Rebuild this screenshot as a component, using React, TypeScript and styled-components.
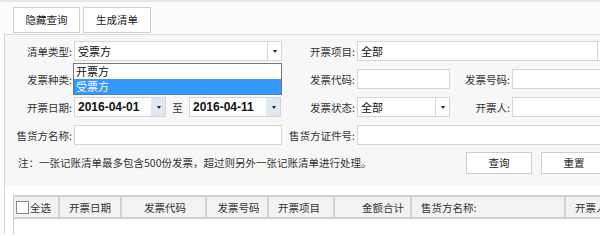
import styled, { createGlobalStyle } from 'styled-components';

const GlobalStyle = createGlobalStyle`
  html, body {
    margin: 0;
    padding: 0;
    background: #ffffff;
    overflow: hidden;
  }
  body {
    width: 600px;
    height: 236px;
    font-family: "Noto Sans CJK SC", "Liberation Sans", sans-serif;
    font-size: 10.5px;
    color: #333;
  }
`;

const Page = styled.div`
  width: 600px;
  height: 236px;
  position: relative;
  overflow: hidden;
`;

const Toolbar = styled.div`
  height: 34px;
  border-top: 2px solid #e8e8e8;
  background: #fbfbfb;
  display: flex;
  align-items: flex-start;
  gap: 3px;
  padding: 5px 0 0 13px;
  box-sizing: border-box;
`;

const Button = styled.button<{ $w: number }>`
  width: ${p => p.$w}px;
  height: 26px;
  border: 1px solid #cfcfcf;
  background: #fff;
  font-family: inherit;
  font-size: 10.5px;
  color: #222;
  padding: 0;
  line-height: 24px;
  cursor: pointer;
`;

const Panel = styled.div`
  margin-left: 4px;
  border-left: 1px solid #d3d3d3;
  border-top: 1px solid #dcdcdc;
  background: #f7f7f7;
  height: 152px;
  box-sizing: border-box;
  padding: 6px 0 0 13px;
`;

const Form = styled.div`
  display: grid;
  grid-template-columns: 56px 208px 75px 93px 62px 100px;
  grid-template-rows: 20px 20px 20px 20px;
  row-gap: 8px;
  align-items: stretch;
`;

const Label = styled.label`
  display: flex;
  align-items: center;
  justify-content: flex-end;
  white-space: nowrap;
  color: #333;
  font-size: 10.5px;
  padding-right: 2px;
`;

const Field = styled.div<{ $span?: number }>`
  grid-column: span ${p => p.$span ?? 1};
  display: flex;
  align-items: stretch;
  min-width: 0;
`;

const Box = styled.div`
  flex: 1;
  display: flex;
  align-items: stretch;
  border: 1px solid #d6d6d6;
  background: #fff;
  box-sizing: border-box;
  min-width: 0;
`;

const Value = styled.span<{ $date?: boolean }>`
  flex: 1;
  display: flex;
  align-items: center;
  padding-left: 3px;
  color: #111;
  font-size: ${p => (p.$date ? '12px' : '11px')};
  font-weight: ${p => (p.$date ? 600 : 400)};
  font-family: ${p => (p.$date ? '"Liberation Sans", sans-serif' : 'inherit')};
  white-space: nowrap;
  overflow: hidden;
`;

const Arrow = styled.span<{ $blue?: boolean }>`
  width: 13px;
  flex: none;
  border-left: 1px solid ${p => (p.$blue ? '#dfe8f5' : '#d6d6d6')};
  background: ${p => (p.$blue ? '#dfe8f5' : '#fff')};
  display: flex;
  align-items: center;
  justify-content: center;
  &::after {
    content: '';
    border-left: 2px solid transparent;
    border-right: 2px solid transparent;
    border-top: 3px solid #222;
  }
`;

const DateRow = styled.div`
  display: flex;
  align-items: stretch;
  width: 100%;
`;

const DateBox = styled(Box)`
  flex: none;
  width: 92px;
`;

const To = styled.span`
  width: 23px;
  display: flex;
  align-items: center;
  justify-content: center;
  font-size: 10.5px;
  color: #333;
`;

const Dropdown = styled.ul`
  position: absolute;
  left: 73px;
  top: 63px;
  width: 209px;
  margin: 0;
  padding: 0;
  list-style: none;
  border: 1px solid #777;
  background: #fff;
  box-sizing: border-box;
`;

const Option = styled.li<{ $active?: boolean }>`
  height: 15px;
  line-height: 15px;
  padding-left: 2px;
  font-size: 11px;
  color: ${p => (p.$active ? '#fff' : '#111')};
  background: ${p => (p.$active ? '#3399ff' : '#fff')};
`;

const NoteRow = styled.div`
  display: flex;
  align-items: center;
  justify-content: space-between;
  margin-top: 7px;
  height: 21px;
`;

const Note = styled.span`
  font-size: 10.5px;
  color: #333;
  white-space: nowrap;
`;

const Actions = styled.div`
  display: flex;
  gap: 9px;
  margin-right: -7px;
`;

const ActionButton = styled(Button)`
  height: 22px;
  line-height: 20px;
`;

const TableArea = styled.div`
  margin-left: 4px;
  border-left: 1px solid #d3d3d3;
  height: 48px;
  padding: 9px 0 0 8px;
  box-sizing: border-box;
`;

const Table = styled.div`
  border-left: 1px solid #c8c8c8;
  height: 100%;
`;

const HeaderRow = styled.div`
  display: flex;
  height: 20px;
  border-top: 2px solid #cfcfcf;
  border-bottom: 2px solid #cfcfcf;
  background: #f2f2f2;
  box-sizing: content-box;
  width: 620px;
`;

const Th = styled.div<{ $w: number; $align?: string }>`
  width: ${p => p.$w}px;
  flex: none;
  box-sizing: border-box;
  border-right: 2px solid #d0d0d0;
  display: flex;
  align-items: center;
  justify-content: ${p => p.$align ?? 'flex-start'};
  padding: 0 6px 0 9px;
  font-size: 10.5px;
  color: #333;
  white-space: nowrap;
`;

const CheckCell = styled(Th)`
  padding-left: 2px;
  gap: 1px;
`;

const Check = styled.span`
  width: 11px;
  height: 11px;
  border: 1px solid #888;
  background: #fff;
  flex: none;
`;

const Select = ({ value }: { value: string }) => (
  <Box>
    <Value>{value}</Value>
    <Arrow />
  </Box>
);

const DateInput = ({ value }: { value: string }) => (
  <DateBox>
    <Value $date>{value}</Value>
    <Arrow $blue />
  </DateBox>
);

const Input = () => <Box />;

export default function App() {
  return (
    <Page>
      <GlobalStyle />
      <Toolbar>
        <Button $w={67}>隐藏查询</Button>
        <Button $w={68}>生成清单</Button>
      </Toolbar>

      <Panel>
        <Form>
          <Label>清单类型:</Label>
          <Field><Select value="受票方" /></Field>
          <Label>开票项目:</Label>
          <Field $span={3}><Select value="全部" /></Field>

          <Label>发票种类:</Label>
          <Field><Select value="" /></Field>
          <Label>发票代码:</Label>
          <Field><Input /></Field>
          <Label>发票号码:</Label>
          <Field><Input /></Field>

          <Label>开票日期:</Label>
          <Field>
            <DateRow>
              <DateInput value="2016-04-01" />
              <To>至</To>
              <DateInput value="2016-04-11" />
            </DateRow>
          </Field>
          <Label>发票状态:</Label>
          <Field><Select value="全部" /></Field>
          <Label>开票人:</Label>
          <Field><Input /></Field>

          <Label>售货方名称:</Label>
          <Field><Input /></Field>
          <Label>售货方证件号:</Label>
          <Field $span={3}><Input /></Field>
        </Form>

        <NoteRow>
          <Note>注：一张记账清单最多包含500份发票，超过则另外一张记账清单进行处理。</Note>
          <Actions>
            <ActionButton $w={66}>查询</ActionButton>
            <ActionButton $w={66}>重置</ActionButton>
          </Actions>
        </NoteRow>
      </Panel>

      <TableArea>
        <Table>
          <HeaderRow>
            <CheckCell $w={46}><Check />全选</CheckCell>
            <Th $w={62}>开票日期</Th>
            <Th $w={85} $align="center">发票代码</Th>
            <Th $w={62} $align="center">发票号码</Th>
            <Th $w={66}>开票项目</Th>
            <Th $w={77} $align="flex-end">金额合计</Th>
            <Th $w={154} $align="flex-start">售货方名称:</Th>
            <Th $w={68}>开票人</Th>
          </HeaderRow>
        </Table>
      </TableArea>

      <Dropdown>
        <Option>开票方</Option>
        <Option $active>受票方</Option>
      </Dropdown>
    </Page>
  );
}
